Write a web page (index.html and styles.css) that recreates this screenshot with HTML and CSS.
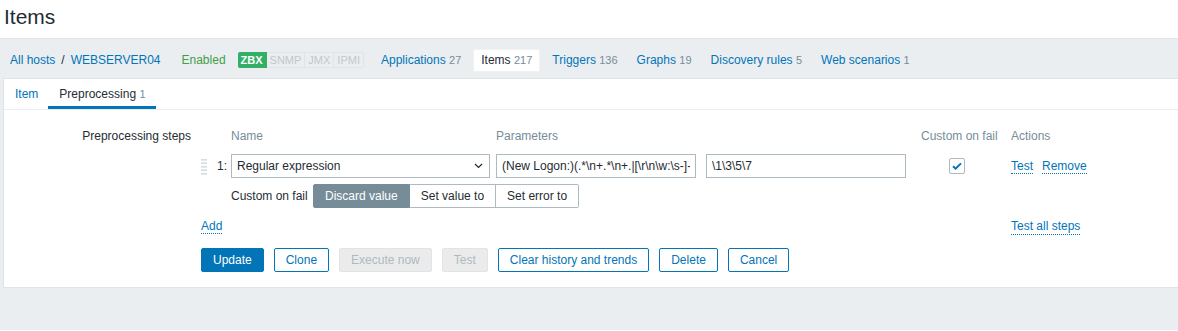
FILE: index.html
```html
<!DOCTYPE html>
<html lang="en">
<head>
  <meta charset="UTF-8">
  <title>Items</title>
  <link rel="stylesheet" href="styles.css">
</head>
<body>

  <!-- Seitenkopf -->
  <header class="page-header">
    <h1>Items</h1>
  </header>

  <main class="wrapper">

    <!-- Host-Navigation -->
    <nav class="host-nav">
      <a href="#" class="crumb">All hosts</a>
      <span class="crumb-sep">/</span>
      <a href="#" class="crumb">WEBSERVER04</a>
      <span class="status-on">Enabled</span>
      <span class="badges">
        <span class="badge badge-on">ZBX</span><span class="badge">SNMP</span><span class="badge">JMX</span><span class="badge">IPMI</span>
      </span>
      <ul class="host-tabs">
        <li><a href="#">Applications</a> <sup>27</sup></li>
        <li class="selected"><span>Items</span> <sup>217</sup></li>
        <li><a href="#">Triggers</a> <sup>136</sup></li>
        <li><a href="#">Graphs</a> <sup>19</sup></li>
        <li><a href="#">Discovery rules</a> <sup>5</sup></li>
        <li><a href="#">Web scenarios</a> <sup>1</sup></li>
      </ul>
    </nav>

    <!-- Formular -->
    <section class="card">
      <ul class="tabs">
        <li><a href="#">Item</a></li>
        <li class="active"><span>Preprocessing</span> <sup>1</sup></li>
      </ul>

      <form class="form">
        <div class="form-row">
          <label class="form-label">Preprocessing steps</label>
          <div class="form-field">

            <div class="steps-head">
              <div class="c-idx"></div>
              <div class="c-name">Name</div>
              <div class="c-params">Parameters</div>
              <div class="c-fail">Custom on fail</div>
              <div class="c-actions">Actions</div>
            </div>

            <div class="step-row">
              <div class="c-idx"><span class="drag"></span><span>1:</span></div>
              <div class="c-name">
                <div class="select">
                  <span>Regular expression</span>
                  <svg width="9" height="6" viewBox="0 0 9 6"><path d="M1 1l3.5 3.5L8 1" fill="none" stroke="#1f2c33" stroke-width="1.2"/></svg>
                </div>
              </div>
              <div class="c-params">
                <input class="input" type="text" value="(New Logon:)(.*\n+.*\n+.|[\r\n\w:\s-]-*)(Account Name:\s+)(.*)" readonly>
                <input class="input" type="text" value="\1\3\5\7" readonly>
              </div>
              <div class="c-fail">
                <span class="checkbox">
                  <svg width="16" height="16" viewBox="0 0 16 16"><path d="M4 8.3l2.6 2.4L12 5.4" fill="none" stroke="#0275b8" stroke-width="2"/></svg>
                </span>
              </div>
              <div class="c-actions">
                <a href="#" class="link-action">Test</a>
                <a href="#" class="link-action">Remove</a>
              </div>
            </div>

            <div class="step-row fail-row">
              <div class="c-idx"></div>
              <span class="fail-label">Custom on fail</span>
              <div class="radio-list">
                <span class="radio active">Discard value</span><span class="radio">Set value to</span><span class="radio">Set error to</span>
              </div>
            </div>

            <div class="add-row">
              <div class="add-cell"><a href="#" class="link-action">Add</a></div>
              <a href="#" class="link-action">Test all steps</a>
            </div>

          </div>
        </div>

        <div class="buttons">
          <button type="button" class="btn btn-main">Update</button>
          <button type="button" class="btn">Clone</button>
          <button type="button" class="btn" disabled>Execute now</button>
          <button type="button" class="btn" disabled>Test</button>
          <button type="button" class="btn">Clear history and trends</button>
          <button type="button" class="btn">Delete</button>
          <button type="button" class="btn">Cancel</button>
        </div>
      </form>
    </section>

  </main>
</body>
</html>
```

FILE: styles.css
```css
/* Grundlayout */
body {
  margin: 0;
  padding: 0;
  background: #fff;
  color: #1f2c33;
  font-family: "Liberation Sans", Arial, sans-serif;
  font-size: 12px;
}
a {
  color: #0275b8;
  text-decoration: none;
}
sup {
  vertical-align: baseline;
  font-size: 11px;
  color: #768d99;
}

/* Kopf */
.page-header {
  height: 38px;
  padding-left: 4px;
}
.page-header h1 {
  margin: 0;
  font-size: 21px;
  font-weight: normal;
  line-height: 33px;
}

/* Grauer Bereich */
.wrapper {
  background: #ebeef0;
  border-top: 1px solid #dfe4e7;
  min-height: calc(100vh - 39px);
  box-sizing: border-box;
  padding-left: 3px;
}

/* Host-Navigation */
.host-nav {
  display: flex;
  align-items: center;
  height: 39px;
  box-sizing: border-box;
  padding: 3px 0 0 7px;
}
.crumb-sep {
  margin: 0 6px 0 6px;
}
.status-on {
  color: #429e47;
  margin-left: 21px;
}
.badges {
  display: flex;
  margin-left: 12px;
}
.badge {
  font-size: 11px;
  line-height: 14px;
  padding: 0 3px;
  color: #bfc8cd;
  border: 1px solid #dfe4e7;
  border-left: none;
}
.badge-on {
  background: #34af67;
  border-color: #34af67;
  color: #fff;
  font-weight: bold;
  border-radius: 2px 0 0 2px;
}
.badge:last-child {
  border-radius: 0 2px 2px 0;
}
.host-tabs {
  display: flex;
  list-style: none;
  margin: 0 0 0 10px;
  padding: 0;
  gap: 5px;
}
.host-tabs li {
  padding: 3px 6px 4px;
  border: 1px solid transparent;
  border-radius: 2px;
}
.host-tabs li.selected {
  background: #fff;
  border-color: #f0f2f3;
  padding: 3px 7px 4px;
}

/* Karte */
.card {
  background: #fff;
  border: 1px solid #dfe4e7;
  border-right: none;
}
.tabs {
  display: flex;
  list-style: none;
  margin: 0;
  padding: 0;
  border-bottom: 1px solid #ebeef0;
}
.tabs li {
  height: 30px;
  line-height: 30px;
  padding: 0 10px 0 11px;
}
.tabs li.active {
  box-shadow: inset 0 -3px #0275b8;
}

/* Formular */
.form {
  padding: 17px 0 15px;
}
.form-row {
  display: flex;
}
.form-label {
  width: 187px;
  padding-right: 10px;
  text-align: right;
  line-height: 18px;
}
.steps-head {
  display: flex;
  height: 18px;
  line-height: 18px;
  color: #768d99;
  margin-bottom: 9px;
}
.c-idx {
  width: 30px;
  display: flex;
  align-items: center;
}
.c-name { width: 265px; }
.c-params {
  width: 425px;
  display: flex;
  gap: 10px;
}
.c-fail { width: 90px; }
.c-actions {
  display: flex;
  gap: 9px;
}

.step-row {
  display: flex;
  align-items: center;
  height: 24px;
}
.drag {
  width: 6px;
  height: 17px;
  margin-right: 10px;
  background-image: radial-gradient(circle, #d7dde0 1.1px, transparent 1.2px);
  background-size: 3px 3.5px;
}
.select {
  width: 259px;
  height: 24px;
  box-sizing: border-box;
  border: 1px solid #acbbc2;
  display: flex;
  align-items: center;
  justify-content: space-between;
  padding: 0 6px 0 5px;
}
.input {
  width: 200px;
  height: 24px;
  box-sizing: border-box;
  border: 1px solid #acbbc2;
  padding: 0 5px;
  font-family: inherit;
  font-size: 12px;
  color: #1f2c33;
  margin: 0;
  outline: none;
}
.checkbox {
  display: block;
  width: 16px;
  height: 16px;
  margin-left: 28px;
  box-sizing: border-box;
  border: 1px solid #acbbc2;
  border-radius: 2px;
  position: relative;
}
.checkbox svg {
  position: absolute;
  top: -1px;
  left: -1px;
}
.link-action {
  border-bottom: 1px dotted #0275b8;
  line-height: 14px;
}

.fail-row {
  margin-top: 6px;
}
.fail-label {
  width: 82px;
}
.radio-list {
  display: flex;
}
.radio {
  height: 24px;
  line-height: 22px;
  box-sizing: border-box;
  padding: 0 11px;
  border: 1px solid #acbbc2;
  border-left: none;
}
.radio:first-child {
  border-left: 1px solid #acbbc2;
  border-radius: 2px 0 0 2px;
}
.radio:last-child {
  border-radius: 0 2px 2px 0;
}
.radio.active {
  background: #768d99;
  border-color: #768d99;
  color: #fff;
}

.add-row {
  display: flex;
  margin-top: 11px;
  height: 16px;
}
.add-cell {
  width: 810px;
}

/* Knöpfe */
.buttons {
  display: flex;
  gap: 10px;
  margin: 13px 0 0 197px;
}
.btn {
  height: 24px;
  padding: 0 11px;
  font-family: inherit;
  font-size: 12px;
  background: #fff;
  color: #0275b8;
  border: 1px solid #0275b8;
  border-radius: 2px;
  margin: 0;
}
.btn-main {
  background: #0275b8;
  color: #fff;
}
.btn:disabled {
  background: #ebebeb;
  color: #acbbc2;
  border-color: #dfe4e7;
}
```
